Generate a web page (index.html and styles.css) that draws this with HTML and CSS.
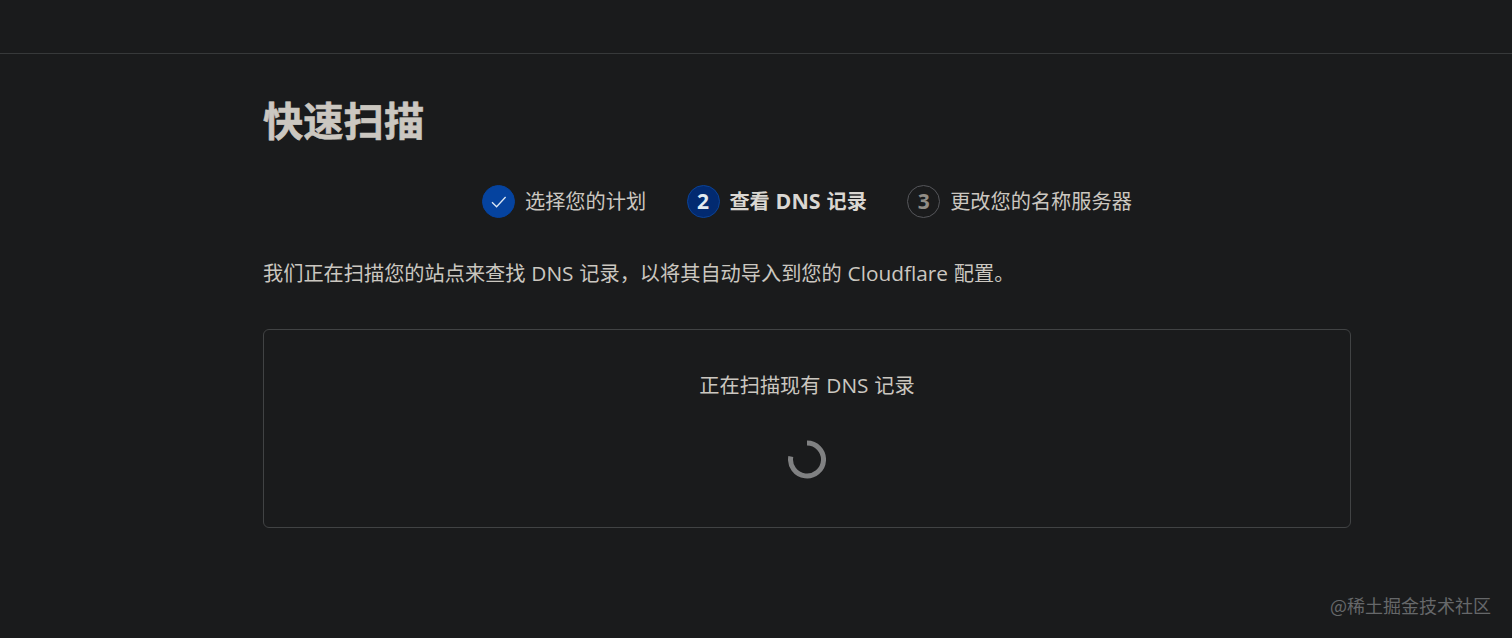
FILE: index.html
```html
<!DOCTYPE html>
<html lang="zh-CN">
<head>
  <meta charset="UTF-8">
  <meta name="viewport" content="width=device-width, initial-scale=1.0">
  <title>快速扫描</title>
  <link rel="stylesheet" href="styles.css">
</head>

<body>
  <header class="topbar"></header>

  <main class="container">
    <h1>快速扫描</h1>

    <!-- Setup steps -->
    <ol class="steps">
      <li class="step done">
        <span class="step-icon">
          <svg width="16" height="12" viewBox="0 0 16 12" fill="none" stroke="currentColor" stroke-width="1.3">
            <path d="M1 6.3 5.6 10.8 14.6 1" />
          </svg>
        </span>
        <span class="step-label">选择您的计划</span>
      </li>
      <li class="step active">
        <span class="step-icon">2</span>
        <span class="step-label">查看 <span class="en">DNS</span> 记录</span>
      </li>
      <li class="step">
        <span class="step-icon">3</span>
        <span class="step-label">更改您的名称服务器</span>
      </li>
    </ol>

    <p class="intro">我们正在扫描您的站点来查找 <span class="en">DNS</span> 记录，以将其自动导入到您的 <span class="en">Cloudflare</span> 配置。</p>

    <section class="card">
      <p>正在扫描现有 <span class="en">DNS</span> 记录</p>
      <svg class="spinner" width="38" height="39" viewBox="0 0 38 39" fill="none" stroke="currentColor" stroke-width="5">
        <path d="M19 3A16.5 16.5 0 1 1 2.8 16.5" />
      </svg>
    </section>
  </main>

  <div class="watermark">@稀土掘金技术社区</div>
</body>

</html>
```

FILE: styles.css
```css
* {
  box-sizing: border-box;
}

body {
  margin: 0;
  height: 638px;
  overflow: hidden;
  background-color: #1a1b1c;
  color: #cbc7c0;
  font-family: "Open Sans", "Noto Sans CJK SC", sans-serif;
  font-size: 20.2px;
  line-height: 30px;
  word-spacing: 0.6px;
}

/* Latin words sit slightly larger next to the Chinese text */
.en {
  font-size: 20.8px;
  line-height: 1;
}

.topbar {
  height: 54px;
  border-bottom: 1px solid #37393a;
}

.container {
  width: 1088px;
  margin-left: 263px;
}

h1 {
  margin: 0;
  padding-top: 42px;
  font-size: 40.3px;
  line-height: 50px;
  -webkit-text-stroke: 0.6px currentColor;
}

/* Steps */
.steps {
  display: flex;
  justify-content: center;
  gap: 40.5px;
  margin: 39px 0 0;
  padding: 0;
  list-style: none;
}

.step {
  display: flex;
  align-items: center;
  gap: 9.8px;
  white-space: nowrap;
}

.step-icon {
  display: flex;
  align-items: center;
  justify-content: center;
  width: 33px;
  height: 33px;
  padding-bottom: 2px;
  border: 1px solid #55565a;
  border-radius: 50%;
  color: #918d86;
  font-size: 21px;
  font-weight: bold;
}

.step-label {
  padding-bottom: 2px;
}

.done .step-icon {
  padding-bottom: 0;
  background-color: #05439f;
  border-color: #05439f;
  color: #dce8f5;
}

.active .step-icon {
  background-color: #022a70;
  border-color: #0b4397;
  color: #e3eaf0;
}

.active .step-label {
  color: #dad7d2;
  font-weight: bold;
}

.active .en {
  font-size: 21.4px;
}

.intro {
  margin: 40px 0 0;
}

/* Scan progress */
.card {
  display: flex;
  flex-direction: column;
  align-items: center;
  height: 199px;
  margin-top: 41px;
  padding-top: 40px;
  border: 1px solid #414344;
  border-radius: 6px;
}

.card p {
  margin: 0;
}

.spinner {
  margin-top: 40px;
  color: #808182;
}

.watermark {
  position: absolute;
  right: 21px;
  bottom: 18px;
  color: #66686a;
  font-family: "Noto Sans CJK SC", sans-serif;
  font-size: 18px;
}
```
